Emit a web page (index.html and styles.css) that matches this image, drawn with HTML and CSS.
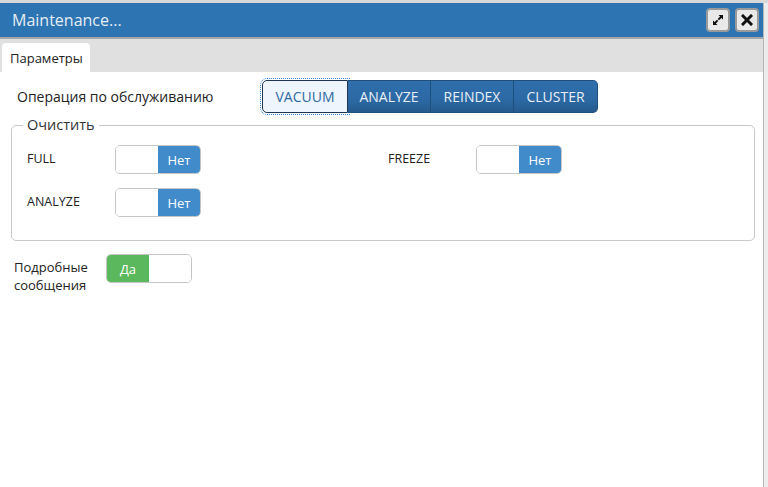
FILE: index.html
```html
<!doctype html>
<html>
<head>
<meta charset="utf-8">
<title>Maintenance...</title>
<link rel="stylesheet" href="styles.css">
</head>
<body>
<div class="backdrop">
  <div class="dialog">
    <div class="titlebar">
      <span class="title">Maintenance...</span>
      <div class="title-buttons">
        <button class="tbtn" title="Развернуть">
          <svg width="12" height="12" viewBox="0 0 12 12"><path d="M6.5 1h4.5v4.5L9.4 3.9 7 6.3 5.7 5 8.1 2.6z M5.5 11H1V6.5l1.6 1.6L5 5.7 6.3 7 3.9 9.4z" fill="#111"/></svg>
        </button>
        <button class="tbtn" title="Закрыть">
          <svg width="12" height="12" viewBox="0 0 12 12"><path d="M2 2l8 8M10 2l-8 8" stroke="#111" stroke-width="3" stroke-linecap="square"/></svg>
        </button>
      </div>
    </div>
    <div class="tabs">
      <div class="tab active">Параметры</div>
    </div>
    <div class="content">
      <div class="op-row">
        <span class="op-label">Операция по обслуживанию</span>
        <div class="seg">
          <button class="seg-btn selected">VACUUM</button>
          <button class="seg-btn">ANALYZE</button>
          <button class="seg-btn">REINDEX</button>
          <button class="seg-btn">CLUSTER</button>
        </div>
      </div>
      <fieldset class="group">
        <legend>Очистить</legend>
        <div class="grid">
          <div class="field">
            <span class="flabel">FULL</span>
            <div class="switch"><span class="off-blank"></span><span class="no">Нет</span></div>
          </div>
          <div class="field">
            <span class="flabel">FREEZE</span>
            <div class="switch"><span class="off-blank"></span><span class="no">Нет</span></div>
          </div>
          <div class="field">
            <span class="flabel">ANALYZE</span>
            <div class="switch"><span class="off-blank"></span><span class="no">Нет</span></div>
          </div>
        </div>
      </fieldset>
      <div class="verbose">
        <span class="vlabel">Подробные<br>сообщения</span>
        <div class="switch"><span class="yes">Да</span><span class="off-blank"></span></div>
      </div>
    </div>
  </div>
</div>
</body>
</html>
```

FILE: styles.css
```css
body {
    margin: 0;
    font-family: "Open Sans", "Noto Sans", sans-serif;
    background: #ececec;
    color: #222;
}
.backdrop {
    height: 487px;
    padding-top: 3px;
    box-sizing: border-box;
    overflow: hidden;
    background: linear-gradient(to bottom, #d8d8d8 0, #d8d8d8 3px, #ececec 3px);
}
.dialog {
    width: 764px;
    height: 484px;
    background: #fff;
    border-right: 1px solid #b8b8b8;
    box-sizing: border-box;
}
.titlebar {
    height: 34px;
    background: #2d75b2;
    border-bottom: 2px solid #a6a6a6;
    display: flex;
    align-items: center;
    justify-content: space-between;
    padding: 0 4px 0 12px;
}
.title {
    color: #e4ecf4;
    font-size: 16px;
}
.title-buttons {
    display: flex;
    gap: 5px;
}
.tbtn {
    width: 24px;
    height: 24px;
    padding: 0;
    border: 2px solid #9a9a9a;
    border-radius: 4px;
    background: #e9e9e9;
    display: flex;
    align-items: center;
    justify-content: center;
}
.tabs {
    height: 33px;
    background: #e0e0e0;
    display: flex;
    align-items: flex-end;
    padding-left: 2px;
}
.tab {
    height: 29px;
    padding: 0 8px;
    background: #fff;
    border-radius: 4px 4px 0 0;
    font-size: 13px;
    line-height: 31px;
    color: #222;
    width: 88px;
    box-sizing: border-box;
}
.content {
    padding: 8px 8px 0 11px;
}
.op-row {
    display: flex;
    align-items: center;
    height: 33px;
}
.op-label {
    font-size: 14px;
    width: 251px;
    padding-left: 6px;
    box-sizing: border-box;
}
.seg {
    display: flex;
}
.seg-btn {
    height: 33px;
    padding: 0;
    width: 83px;
    font-family: inherit;
    font-size: 14px;
    color: #e9eff6;
    background: linear-gradient(to bottom, #2f6fac 0, #2c69a4 60%, #265b8e 100%);
    border: 1px solid #214f7c;
    border-left: none;
}
.seg-btn:last-child {
    border-radius: 0 5px 5px 0;
    width: 84px;
}
.seg-btn.selected {
    width: 86px;
    background: #eef5fc;
    color: #2e6aa0;
    border: 1px solid #1d3550;
    border-radius: 5px 0 0 5px;
    outline: 1px dotted #3a84d8;
    outline-offset: 1px;
}
.group {
    margin: 4px 0 0 0;
    border: 1px solid #c8c8c8;
    border-radius: 5px;
    padding: 12px 0 23px 15px;
    box-sizing: border-box;
}
.group legend {
    font-size: 14.5px;
    color: #333;
    padding: 0 4px;
    margin-left: -4px;
    line-height: 16px;
}
.grid {
    display: grid;
    grid-template-columns: 361px 1fr;
    row-gap: 14px;
}
.field {
    display: flex;
    align-items: center;
}
.flabel {
    font-size: 12.5px;
    width: 88px;
    margin-top: -3px;
    color: #222;
}
.switch {
    display: flex;
    width: 86px;
    height: 29px;
    border: 1px solid #c6c6c6;
    border-radius: 5px;
    overflow: hidden;
    box-sizing: border-box;
}
.off-blank {
    flex: 1;
    background: #fff;
}
.no, .yes {
    flex: 1;
    color: #fff;
    font-size: 13px;
    display: flex;
    align-items: center;
    justify-content: center;
}
.no {
    background: #428bca;
}
.yes {
    background: #5cb85c;
}
.verbose {
    display: flex;
    align-items: flex-start;
    margin-top: 13px;
    padding-left: 3px;
}
.vlabel {
    font-size: 13px;
    line-height: 18px;
    width: 92px;
    margin-top: 4px;
}
```
